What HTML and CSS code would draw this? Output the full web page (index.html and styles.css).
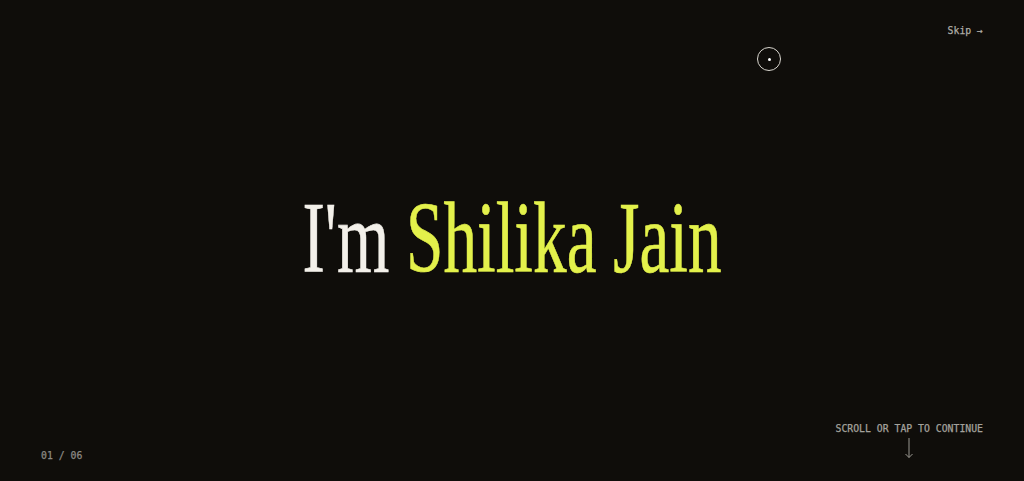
FILE: index.html
```html
<!DOCTYPE html>
<html lang="en">
<head>
<meta charset="utf-8">
<title>Shilika Jain</title>
<link rel="stylesheet" href="styles.css">
</head>
<body>
<div class="page">
  <header class="top">
    <a class="skip" href="#">Skip →</a>
  </header>
  <main class="hero">
    <h1 class="title"><span class="im">I'm</span> <span class="name">Shilika Jain</span></h1>
  </main>
  <footer class="bottom">
    <div class="counter">01 / 06</div>
    <div class="hint">
      <span class="hint-text">SCROLL OR TAP TO CONTINUE</span>
      <svg class="hint-arrow" width="10" height="22" viewBox="0 0 10 22" aria-hidden="true">
        <path d="M5 1 V20.5 M1.5 17 L5 20.5 L8.5 17" fill="none" stroke="#9a9891" stroke-width="1"/>
      </svg>
    </div>
  </footer>
</div>
<div class="cursor"><span class="cursor-dot"></span></div>
</body>
</html>
```
FILE: styles.css
```css
html, body {
  margin: 0;
  padding: 0;
  background: #0f0d0a;
}
body {
  overflow: hidden;
}
.page {
  height: 100vh;
  box-sizing: border-box;
  display: flex;
  flex-direction: column;
  padding: 24px 41px 20px 41px;
  font-family: "DejaVu Sans Mono", "Liberation Mono", monospace;
  font-size: 9.8px;
  font-weight: 400;
  -webkit-text-stroke: 0.25px currentColor;
  color: #a3a19b;
}
.top {
  display: flex;
  justify-content: flex-end;
}
.skip {
  color: #aeaca6;
  text-decoration: none;
  line-height: 14px;
}
.hero {
  flex: 1;
  display: flex;
  align-items: center;
  justify-content: center;
}
.title {
  margin: 16px 0 0 0;
  font-family: "Liberation Serif", "Times New Roman", serif;
  font-weight: 400;
  font-size: 102px;
  line-height: 1;
  white-space: nowrap;
  transform: scaleX(0.659);
  -webkit-text-stroke: 0.6px currentColor;
}
.im {
  color: #f3f0ea;
}
.name {
  color: #e3f14b;
}
.bottom {
  display: flex;
  justify-content: space-between;
  align-items: flex-end;
}
.counter {
  line-height: 14px;
  color: #8c8a84;
  margin-bottom: -2px;
}
.hint {
  display: flex;
  flex-direction: column;
  align-items: center;
  gap: 0;
  margin-bottom: 2px;
}
.hint-text {
  line-height: 14px;
  margin-bottom: 1px;
  color: #a3a19b;
}
.hint-arrow {
  display: block;
}
.cursor {
  position: absolute;
  left: 757px;
  top: 47px;
  width: 22px;
  height: 22px;
  border: 1px solid #d9d6cf;
  border-radius: 50%;
  display: flex;
  align-items: center;
  justify-content: center;
}
.cursor-dot {
  width: 3px;
  height: 3px;
  background: #ffffff;
  border-radius: 50%;
}
```
